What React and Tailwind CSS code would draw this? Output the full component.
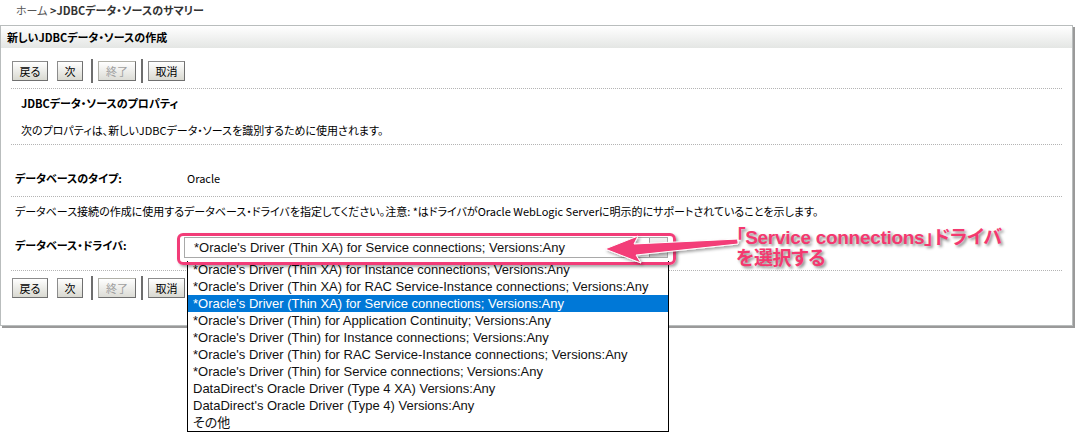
import React from 'react';

const jp = "font-['Noto_Sans_CJK_JP',sans-serif] [font-feature-settings:'palt']";

const drivers = [
  "*Oracle's Driver (Thin XA) for Instance connections; Versions:Any",
  "*Oracle's Driver (Thin XA) for RAC Service-Instance connections; Versions:Any",
  "*Oracle's Driver (Thin XA) for Service connections; Versions:Any",
  "*Oracle's Driver (Thin) for Application Continuity; Versions:Any",
  "*Oracle's Driver (Thin) for Instance connections; Versions:Any",
  "*Oracle's Driver (Thin) for RAC Service-Instance connections; Versions:Any",
  "*Oracle's Driver (Thin) for Service connections; Versions:Any",
  "DataDirect's Oracle Driver (Type 4 XA) Versions:Any",
  "DataDirect's Oracle Driver (Type 4) Versions:Any",
  "その他",
];

const Btn = ({ label, width, disabled }) => (
  <button
    disabled={disabled}
    className={`h-[20px] border border-[#8c8c8c] border-b-[#6f6f6f] border-r-[#6f6f6f] bg-gradient-to-b from-white to-[#d9d9d1] text-[11px] leading-none ${width} ${
      disabled ? 'text-[#a0a0a0] from-[#eeeeea] to-[#dcdcd6] border-[#b0b0a8]' : 'text-black'
    }`}
  >
    {label}
  </button>
);

const Sep = () => <div className="w-[2px] h-[24px] bg-[#6e6e6e] -my-[2px]" />;

const ButtonRow = () => (
  <div className="flex items-center h-[20px] pl-[11px]">
    <Btn label="戻る" width="w-[36px]" />
    <div className="w-[9px]" />
    <Btn label="次" width="w-[26px]" />
    <div className="w-[8px]" />
    <Sep />
    <div className="w-[5px]" />
    <Btn label="終了" width="w-[38px]" disabled />
    <div className="w-[5px]" />
    <Sep />
    <div className="w-[5px]" />
    <Btn label="取消" width="w-[37px]" />
  </div>
);

const Dots = () => <div className="mx-[10px] border-t border-dotted border-[#b4b4b4]" />;

export default function App() {
  return (
    <div className={`relative w-[1080px] h-[446px] bg-white overflow-hidden text-black ${jp}`}>
      {/* breadcrumb */}
      <div className="h-[25px] pl-[16px] pt-[2px] text-[11px]">
        <span className="text-[#555]">ホーム </span>
        <span className="font-bold text-[#333]">&gt;JDBCデータ・ソースのサマリー</span>
      </div>

      {/* panel */}
      <div className="mr-[7px] h-[301px] border border-[#b9bdbd] shadow-[2px_2px_0_#9a9a9a] bg-white">
        <div className="h-[22px] flex items-center px-[6px] bg-gradient-to-b from-white to-[#e4e6e4] text-[11px] font-bold">
          新しいJDBCデータ・ソースの作成
        </div>

        <div className="mt-[13px]">
          <ButtonRow />
        </div>
        <div className="mt-[7px]">
          <Dots />
        </div>

        <div className="h-[28px] flex items-center pl-[20px] text-[11px] font-bold">
          JDBCデータ・ソースのプロパティ
        </div>
        <div className="h-[26px] flex items-center pl-[20px] text-[11px]">
          次のプロパティは、新しいJDBCデータ・ソースを識別するために使用されます。
        </div>
        <div className="mt-[1px]">
          <Dots />
        </div>

        <div className="h-[51px] pt-[16px] flex items-center pl-[14px] text-[11px]">
          <span className="w-[172px] font-bold">データベースのタイプ:</span>
          <span>Oracle</span>
        </div>
        <Dots />

        <div className="h-[28px] flex items-center pl-[14px] text-[11px]">
          データベース接続の作成に使用するデータベース・ドライバを指定してください。注意: *はドライバがOracle WebLogic Serverに明示的にサポートされていることを示します。
        </div>

        <div className="h-[45px] flex items-start pl-[14px] pt-[12px]">
          <span className="w-[169px] font-bold text-[11px] leading-[16px]">データベース・ドライバ:</span>
          <div className="w-[484px] h-[21px] flex border border-[#a9a9a9] bg-white">
            <div className="flex-1 flex items-center pl-[9px] text-[13px] font-['Liberation_Sans',sans-serif] text-[#111]">
              *Oracle's Driver (Thin XA) for Service connections; Versions:Any
            </div>
            <div className="w-[18px] h-full border-l border-[#a0a0a0] bg-gradient-to-b from-[#f2f2f2] to-[#dadada]" />
          </div>
        </div>
        <Dots />

        <div className="mt-[7px]">
          <ButtonRow />
        </div>
      </div>

      {/* open dropdown list */}
      <div className="absolute left-[187px] top-[261px] w-[482px] border border-black border-t-0 bg-white font-['Liberation_Sans','Noto_Sans_CJK_JP',sans-serif] text-[13px]">
        {drivers.map((d, i) => (
          <div
            key={i}
            className={`h-[17px] flex items-center pl-[5px] whitespace-nowrap ${
              i === 2 ? 'bg-[#0078d7] text-white' : 'text-[#111]'
            }`}
          >
            {d}
          </div>
        ))}
      </div>

      {/* pink highlight frame */}
      <div className="absolute left-[177px] top-[233px] w-[499px] h-[32px] rounded-[6px] border-[3px] border-[#f23c78] shadow-[2px_2px_3px_rgba(0,0,0,0.35)]" />

      {/* arrow */}
      <svg className="absolute left-0 top-0" width="1080" height="446">
        <defs>
          <filter id="sh" x="-10%" y="-50%" width="130%" height="200%">
            <feDropShadow dx="2" dy="2" stdDeviation="1.5" floodColor="#000" floodOpacity="0.35" />
          </filter>
        </defs>
        <polygon
          points="605,249 638,236 634,244 738,239 738,244 636,255 641,263"
          fill="#f33d78"
          stroke="#ffffff"
          strokeWidth="1"
          strokeLinejoin="round"
          filter="url(#sh)"
        />
      </svg>

      {/* annotation */}
      <div className="absolute left-[736px] top-[227px] text-[19px] leading-[21px] font-bold tracking-[-0.3px] text-[#f4386f] font-['Liberation_Sans','Noto_Sans_CJK_JP',sans-serif] [font-feature-settings:'palt'] [paint-order:stroke_fill] [-webkit-text-stroke:3px_white] [text-shadow:2px_2px_3px_rgba(0,0,0,0.45)]">
        <div>「Service connections」ドライバ</div>
        <div>を選択する</div>
      </div>
    </div>
  );
}
